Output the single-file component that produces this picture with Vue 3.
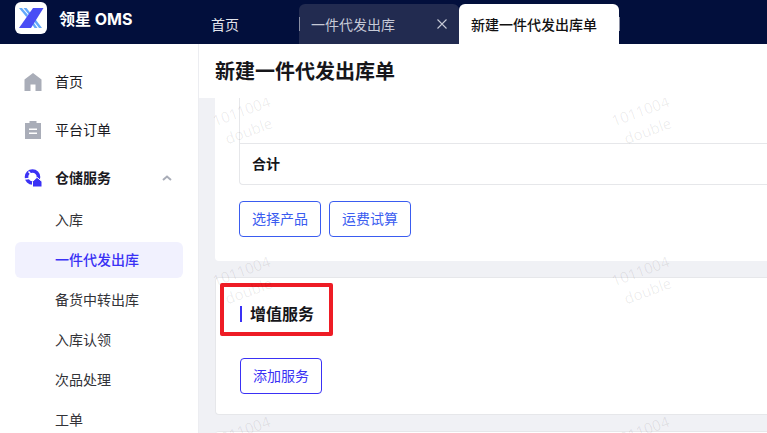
<script setup>
const tabs = [
  { label: '首页', kind: 'plain' },
  { label: '一件代发出库', kind: 'open' },
  { label: '新建一件代发出库单', kind: 'active' },
]
const subItems = ['入库', '一件代发出库', '备货中转出库', '入库认领', '次品处理', '工单']
const marks = []
for (const y of [2, 162, 322]) {
  for (const x of [-54, 345]) marks.push({ x, y })
}
</script>

<template>
  <div class="app">
    <header class="topbar">
      <div class="brand">
        <span class="logo">
          <svg width="32" height="32" viewBox="0 0 32 32">
            <g fill="#62a8fb">
              <path d="M4 6h3l6 7-1.600 1.900z" />
              <path d="M8.500 6h3l4 5-1.500 1.800z" />
              <path d="M17.500 17.500l1.600-1.900L27 26h-3z" />
              <path d="M15.500 20l1.500-1.800L22.500 26h-3z" />
            </g>
            <path d="M18 6h10.500L16 26H4z" fill="#4a4df5" />
          </svg>
        </span>
        <span class="brand-name">领星 OMS</span>
      </div>
      <nav class="tabs">
        <div v-for="tab in tabs" :key="tab.label" class="tab" :class="'tab-' + tab.kind">
          <span>{{ tab.label }}</span>
          <svg v-if="tab.kind === 'open'" class="close" width="10" height="10" viewBox="0 0 10 10">
            <path d="M.5.500l9 9M9.500.500l-9 9" stroke="#c6c9d6" stroke-width="1.100" fill="none" />
          </svg>
        </div>
      </nav>
    </header>

    <div class="body">
      <aside class="sidebar">
        <div class="menu-item">
          <svg class="menu-icon" width="18" height="18" viewBox="0 0 18 18">
            <path fill-rule="evenodd" d="M9 0l8.500 6.500V18h-6v-6.500h-5V18H.5V6.500z" fill="#a9adb8" />
          </svg>
          <span>首页</span>
        </div>
        <div class="menu-item">
          <svg class="menu-icon" width="18" height="18" viewBox="0 0 18 18">
            <path fill-rule="evenodd" d="M5.500 0h7v2H17v16H1V2h4.500zM5 7.500v1.600h8V7.500zm0 4v1.600h8v-1.600z" fill="#a9adb8" />
          </svg>
          <span>平台订单</span>
        </div>
        <div class="menu-item menu-open">
          <svg class="menu-icon" width="18" height="18" viewBox="0 0 18 18">
            <circle cx="8.500" cy="8" r="6" fill="none" stroke="#3a31f5" stroke-width="3.600" />
            <path d="M4.500 2.500l6 6.500M1 10l4-.5" stroke="#fff" stroke-width="1.500" fill="none" />
            <path d="M13 8.300l5 4.200V18H8.500v-5.500z" fill="#3a31f5" stroke="#fff" stroke-width="1" />
          </svg>
          <span>仓储服务</span>
          <svg class="chevron" width="10" height="6" viewBox="0 0 10 6">
            <path d="M1 5l4-3.500L9 5" fill="none" stroke="#a9adb8" stroke-width="2" />
          </svg>
        </div>
        <div
          v-for="(item, i) in subItems"
          :key="item"
          class="sub-item"
          :class="{ 'sub-active': i === 1 }"
        >{{ item }}</div>
      </aside>

      <main class="main">
        <h1 class="page-title">新建一件代发出库单</h1>
        <div class="scroll">
          <section class="card card-first">
            <div class="table">
              <div class="table-head"></div>
              <div class="table-total">合计</div>
            </div>
            <div class="actions">
              <button class="btn btn-blue">选择产品</button>
              <button class="btn btn-blue">运费试算</button>
            </div>
          </section>

          <section class="card card-second">
            <h2 class="section-title">增值服务</h2>
            <button class="btn btn-indigo">添加服务</button>
            <div class="highlight"></div>
          </section>

          <section class="card card-third"></section>

          <div
            v-for="(mark, i) in marks"
            :key="i"
            class="watermark"
            :style="{ left: mark.x + 'px', top: mark.y + 'px' }"
          >1011004<br />double</div>
        </div>
      </main>
    </div>
  </div>
</template>

<style>
html, body { margin: 0; padding: 0; overflow: hidden; background: #fff; }
</style>

<style scoped>
.app {
  width: 767px;
  height: 433px;
  overflow: hidden;
  display: flex;
  flex-direction: column;
  font-family: "Inter", "Noto Sans CJK SC", sans-serif;
  font-size: 14px;
  color: #1a1a1f;
}
.topbar {
  height: 44px;
  flex: none;
  background: #020f3c;
  display: flex;
  align-items: stretch;
}
.brand {
  width: 199px;
  flex: none;
  display: flex;
  align-items: center;
  padding-left: 15px;
  box-sizing: border-box;
}
.logo {
  width: 32px;
  height: 32px;
  background: #fff;
  border-radius: 6px;
  margin-top: -8px;
  flex: none;
  display: block;
}
.logo svg { display: block; }
.brand-name {
  margin-left: 12px;
  margin-top: -9px;
  color: #fff;
  font-size: 16px;
  font-weight: 700;
}
.tabs {
  display: flex;
  align-items: flex-end;
  flex: 1;
}
.tab {
  height: 40px;
  width: 160px;
  box-sizing: border-box;
  display: flex;
  align-items: center;
  padding: 0 12px;
  position: relative;
}
.tab-plain {
  width: 100px;
  color: #e3e5ec;
}
.tab-open {
  background: #222b50;
  color: #c6c9d6;
  border-radius: 6px 6px 0 0;
  justify-content: space-between;
}
.tab-open::before,
.tab-active::after {
  content: "";
  position: absolute;
  top: 13px;
  width: 1px;
  height: 14px;
  background: #8a8fa3;
}
.tab-open::before { left: 0; }
.tab-active::after { right: -1px; }
.tab-active {
  background: #fff;
  color: #111;
  font-weight: 500;
  border-radius: 6px 6px 0 0;
}
.body {
  flex: 1;
  display: flex;
  min-height: 0;
}
.sidebar {
  width: 199px;
  flex: none;
  box-sizing: border-box;
  padding-top: 14px;
  background: #fff;
  border-right: 1px solid #ecedf1;
}
.menu-item {
  height: 48px;
  display: flex;
  align-items: center;
  padding-left: 24px;
  position: relative;
}
.menu-item > span {
  position: relative;
  top: -1px;
}
.menu-icon {
  width: 18px;
  height: 18px;
  margin-right: 13px;
  flex: none;
}
.menu-open { font-weight: 700; }
.chevron { margin-left: 51px; }
.sub-item {
  height: 36px;
  line-height: 36px;
  margin: 0 15px 4px;
  padding-left: 40px;
  border-radius: 6px;
  color: #333338;
  width: 168px;
  box-sizing: border-box;
}
.sub-active {
  background: #f1f1fe;
  color: #3a31f5;
  font-weight: 500;
}
.main {
  flex: 1;
  min-width: 0;
  display: flex;
  flex-direction: column;
}
.page-title {
  height: 54px;
  flex: none;
  margin: 0;
  padding: 0 0 0 16px;
  line-height: 57px;
  font-size: 20px;
  font-weight: 700;
  color: #16161a;
  background: #fff;
}
.scroll {
  flex: 1;
  position: relative;
  overflow: hidden;
  background: #f0f1f5;
  padding-left: 16px;
}
.card {
  background: #fff;
  border-radius: 4px 0 0 4px;
  box-sizing: border-box;
}
.card-first {
  height: 163px;
  padding-left: 24px;
  border-radius: 0 0 0 4px;
}
.table {
  height: 87px;
  border-left: 1px solid #e6e7ea;
  border-bottom: 1px solid #e6e7ea;
  border-radius: 0 0 0 4px;
  margin-bottom: 16px;
  box-sizing: border-box;
}
.table-head {
  height: 45px;
  border-bottom: 1px solid #e6e7ea;
}
.table-total {
  height: 40px;
  line-height: 39px;
  padding-left: 12px;
  font-weight: 700;
  color: #16161a;
}
.actions {
  display: flex;
  gap: 8px;
}
.btn {
  width: 82px;
  height: 36px;
  padding: 0 0 2px;
  background: #fff;
  border-radius: 4px;
  font: inherit;
  display: block;
}
.btn-blue {
  border: 1px solid #3a5cf0;
  color: #3a5cf0;
}
.btn-indigo {
  border: 1px solid #3a31f5;
  color: #3a31f5;
  margin-left: 24px;
}
.card-second {
  margin-top: 16px;
  height: 138px;
  border: 1px solid #e6e7ea;
  border-right: 0;
  position: relative;
  padding-top: 80px;
}
.section-title {
  position: absolute;
  left: 24px;
  top: 28px;
  margin: 0;
  height: 16px;
  padding-left: 8px;
  border-left: 2px solid #3a31f5;
  font-size: 16px;
  line-height: 16px;
  font-weight: 700;
  color: #16161a;
}
.highlight {
  position: absolute;
  left: 4px;
  top: 5px;
  width: 113px;
  height: 53px;
  box-sizing: border-box;
  border: 4px solid #ee1c25;
  border-radius: 2px;
}
.card-third {
  margin-top: 16px;
  height: 60px;
  border-top: 1px solid #e6e7ea;
}
.watermark {
  position: absolute;
  width: 200px;
  text-align: center;
  font-family: "Open Sans", sans-serif;
  font-size: 15px;
  line-height: 21px;
  color: rgba(0, 0, 0, 0.08);
  transform: rotate(-20deg);
  pointer-events: none;
  white-space: nowrap;
}
</style>
